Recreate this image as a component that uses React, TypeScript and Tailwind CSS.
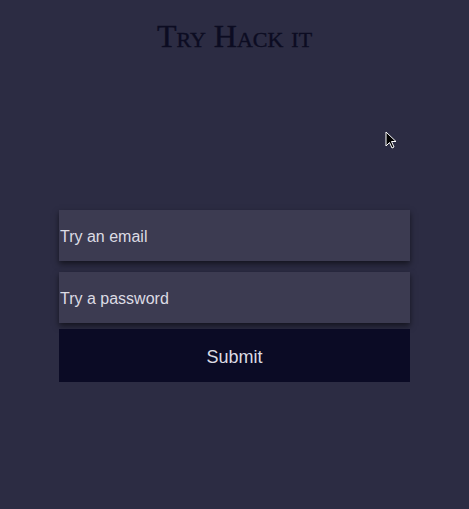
export default function App() {
  return (
    <div className="relative min-h-[509px] w-full bg-[#2c2c43] font-['Liberation_Sans',Arial,sans-serif]">
      <h1 className="pt-[16px] text-center font-['Liberation_Serif','Times_New_Roman',serif] text-[32px] leading-[40px] text-[#0c0c22] [font-variant:small-caps] [-webkit-text-stroke:0.4px_#0c0c22]">
        Try Hack it
      </h1>
      <form className="mx-auto mt-[154px] flex w-[351px] flex-col">
        <input
          type="email"
          placeholder="Try an email"
          className="h-[51px] w-full bg-[#3c3b51] px-px pt-[2px] text-[16px] text-[#dcdce4] shadow-[0_3px_6px_rgba(0,0,0,0.55)] outline-none placeholder:text-[#dcdce4]"
        />
        <input
          type="password"
          placeholder="Try a password"
          className="mt-[11px] h-[51px] w-full bg-[#3c3b51] px-px pt-[2px] text-[16px] text-[#dcdce4] shadow-[0_3px_6px_rgba(0,0,0,0.55)] outline-none placeholder:text-[#dcdce4]"
        />
        <button
          type="button"
          className="mt-[6px] h-[53px] w-full bg-[#0b0b25] pt-[4px] text-[18px] text-[#dcdce4]"
        >
          Submit
        </button>
      </form>
      <svg
        className="absolute left-[385px] top-[131px]"
        width="12"
        height="19"
        viewBox="0 0 12 19"
      >
        <path
          d="M1 1 L1 15 L4.5 11.5 L7 17 L9 16 L6.5 10.5 L11 10.5 Z"
          fill="#000"
          stroke="#fff"
          strokeWidth="1"
        />
      </svg>
    </div>
  );
}
